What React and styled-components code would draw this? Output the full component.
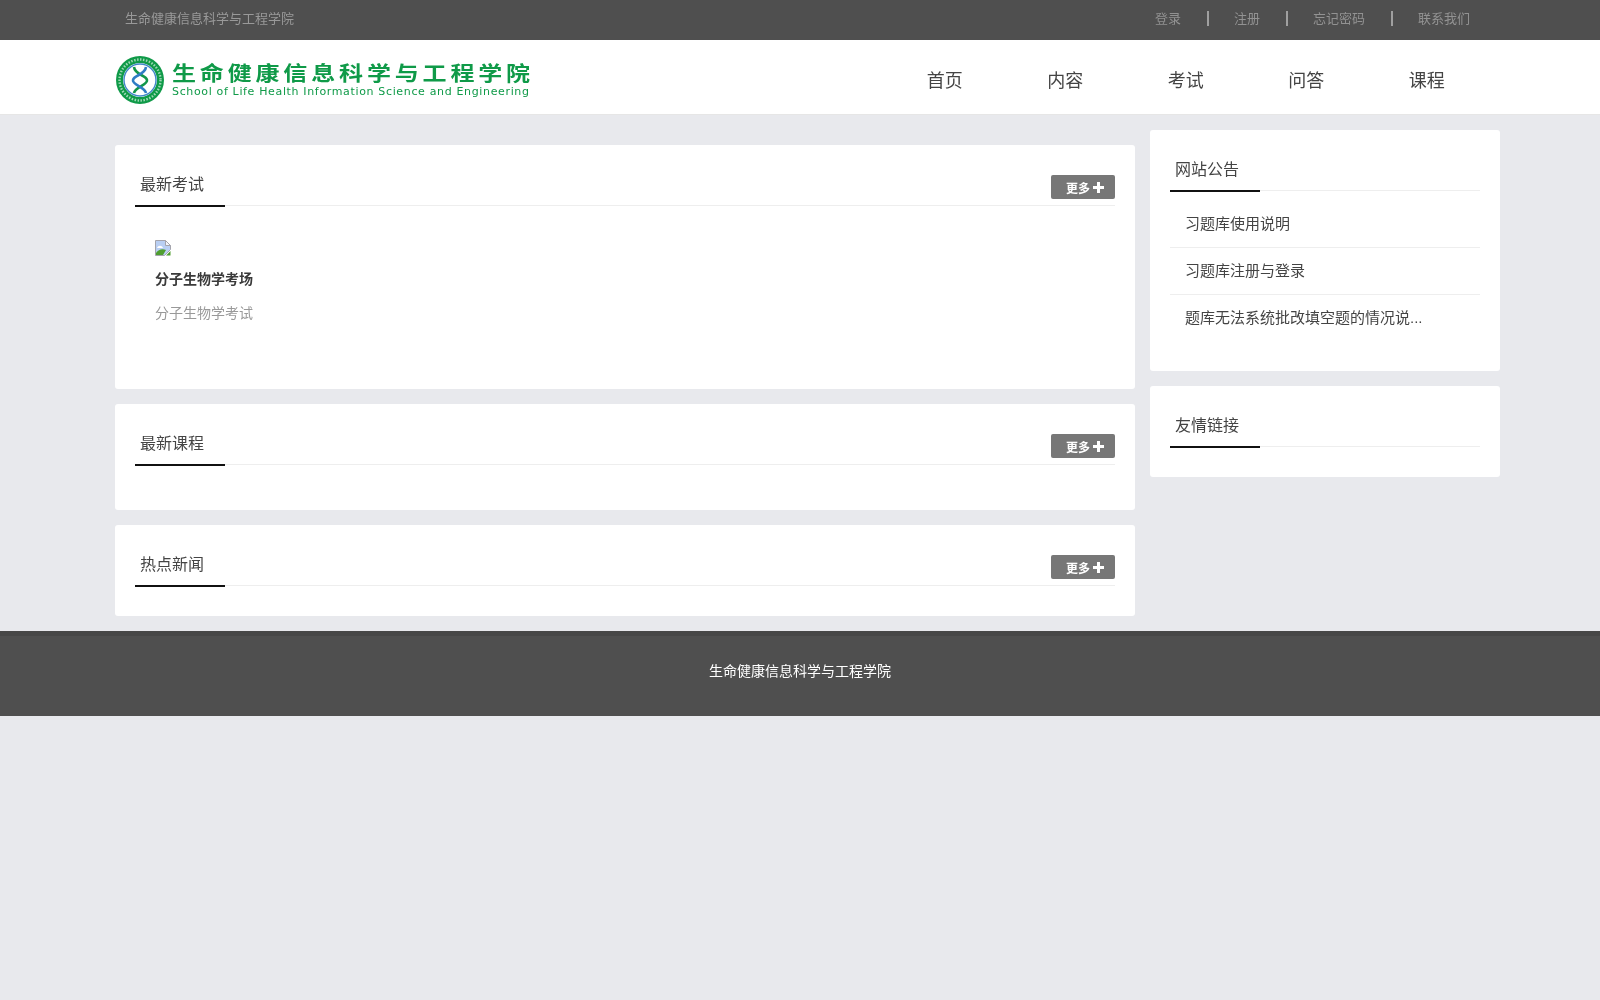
import styled, { createGlobalStyle } from "styled-components";

const navItems = ["首页", "内容", "考试", "问答", "课程"];
const topLinks = ["登录", "注册", "忘记密码", "联系我们"];
const notices = ["习题库使用说明", "习题库注册与登录", "题库无法系统批改填空题的情况说..."];

export default function App() {
  return (
    <>
      <GlobalStyle />
      <TopBar>
        <TopInner>
          <SiteName>生命健康信息科学与工程学院</SiteName>
          <TopLinks>
            {topLinks.map((link) => (
              <TopLink key={link}>{link}</TopLink>
            ))}
          </TopLinks>
        </TopInner>
      </TopBar>
      <Header>
        <HeaderInner>
          <Logo>
            <LogoBadge />
            <LogoText>
              <LogoCn>生命健康信息科学与工程学院</LogoCn>
              <LogoEn>School of Life Health Information Science and Engineering</LogoEn>
            </LogoText>
          </Logo>
          <Nav>
            {navItems.map((item) => (
              <NavItem key={item}>{item}</NavItem>
            ))}
          </Nav>
        </HeaderInner>
      </Header>
      <Main>
        <LeftColumn>
          <Card>
            <SectionTitle title="最新考试" more />
            <ExamItem>
              <BrokenImage />
              <ExamName>分子生物学考场</ExamName>
              <ExamDesc>分子生物学考试</ExamDesc>
            </ExamItem>
          </Card>
          <Card $height={106}>
            <SectionTitle title="最新课程" more />
          </Card>
          <Card $height={91}>
            <SectionTitle title="热点新闻" more />
          </Card>
        </LeftColumn>
        <RightColumn>
          <SideCard>
            <SectionTitle title="网站公告" />
            <NoticeList>
              {notices.map((notice) => (
                <NoticeItem key={notice}>{notice}</NoticeItem>
              ))}
            </NoticeList>
          </SideCard>
          <SideCard>
            <SectionTitle title="友情链接" />
          </SideCard>
        </RightColumn>
      </Main>
      <Footer>生命健康信息科学与工程学院</Footer>
    </>
  );
}

function SectionTitle({ title, more }) {
  return (
    <TitleRow>
      <TitleText>{title}</TitleText>
      {more && (
        <MoreButton>
          更多
          <PlusIcon />
        </MoreButton>
      )}
    </TitleRow>
  );
}

function PlusIcon() {
  return (
    <svg width="11" height="11" viewBox="0 0 11 11">
      <path d="M4 0h3v4h4v3H7v4H4V7H0V4h4z" fill="#fff" />
    </svg>
  );
}

function BrokenImage() {
  return (
    <BrokenIcon width="16" height="16" viewBox="0 0 16 16">
      <path d="M.5.5h10l5 5v4l-6 6H.5z" fill="#b9cff3" stroke="#a4a4ac" />
      <path d="M2 8c1-3 5-3 6 0z" fill="#fff" />
      <path d="M1 15v-2c2-3 6-5 10-3l-3 5z" fill="#4f9e2f" />
      <path d="M11 15.5l4.5-4.5v4.5z" fill="#4f9e2f" />
      <path d="M10.5.5v5h5z" fill="#f4f6fb" stroke="#a4a4ac" />
    </BrokenIcon>
  );
}

function LogoBadge() {
  return (
    <svg width="48" height="48" viewBox="0 0 48 48">
      <circle cx="24" cy="24" r="24" fill="#0f9a48" />
      <circle cx="24" cy="24" r="20.5" fill="none" stroke="#9fd8b5" strokeWidth="2.4" strokeDasharray="1.5 1.5" />
      <circle cx="24" cy="24" r="17" fill="#fff" />
      <circle cx="24" cy="24" r="16" fill="none" stroke="#3f86c8" strokeWidth="1.4" />
      <path d="M18 11c1 8 12 8 13 13s-12 7-13 13" fill="none" stroke="#12964a" strokeWidth="2.6" />
      <path d="M30 11c-1 8-12 8-13 13s12 7 13 13" fill="none" stroke="#2f7cc4" strokeWidth="2.6" />
    </svg>
  );
}

const GlobalStyle = createGlobalStyle`
  html, body {
    margin: 0;
    padding: 0;
    background: #e8e9ed;
    font-family: "Liberation Sans", "Noto Sans CJK SC", sans-serif;
    color: #333;
  }

  #root {
    will-change: transform;
  }
`;

const TopBar = styled.div`
  height: 40px;
  background: #4f4f4f;
`;

const TopInner = styled.div`
  width: 1350px;
  margin-left: 125px;
  height: 100%;
  box-sizing: border-box;
  padding-bottom: 4px;
  display: flex;
  align-items: center;
  justify-content: space-between;
`;

const SiteName = styled.div`
  font-size: 13px;
  line-height: 15px;
  color: #999;
`;

const TopLinks = styled.div`
  display: flex;
  margin-right: -21px;
`;

const TopLink = styled.a`
  font-size: 13px;
  line-height: 15px;
  color: #929292;
  padding: 0 26px 0 25px;
  border-left: 2px solid #a0a0a0;

  &:first-child {
    border-left: 0;
  }
`;

const Header = styled.header`
  height: 75px;
  box-sizing: border-box;
  background: #fff;
  border-bottom: 1px solid #e6e6e6;
`;

const HeaderInner = styled.div`
  margin-left: 116px;
  width: 1371px;
  height: 100%;
  display: flex;
  align-items: center;
  justify-content: space-between;
`;

const Logo = styled.div`
  display: flex;
  align-items: center;
  gap: 8px;
  margin-top: 6px;
`;

const LogoText = styled.div`
  display: flex;
  flex-direction: column;
  color: #0f9a48;
`;

const LogoCn = styled.div`
  margin-top: 1px;
  font-size: 20px;
  line-height: 24px;
  font-weight: 700;
  letter-spacing: 3.2px;
  white-space: nowrap;
  transform: scaleX(1.2);
  transform-origin: left center;
`;

const LogoEn = styled.div`
  margin-top: -1px;
  font-family: "DejaVu Sans", sans-serif;
  font-size: 11px;
  line-height: 14px;
  letter-spacing: 0.65px;
  white-space: nowrap;
`;

const Nav = styled.nav`
  display: flex;
  margin-top: 3px;
`;

const NavItem = styled.a`
  font-size: 18px;
  color: #444;
  padding: 0 42.25px;
`;

const Main = styled.main`
  width: 1385px;
  margin-left: 115px;
  display: flex;
  align-items: flex-start;
  gap: 15px;
  padding-top: 15px;
`;

const LeftColumn = styled.div`
  width: 1020px;
  margin-top: 15px;
  display: flex;
  flex-direction: column;
  gap: 15px;
`;

const RightColumn = styled.div`
  width: 350px;
  display: flex;
  flex-direction: column;
  gap: 15px;
`;

const Card = styled.section`
  background: #fff;
  border-radius: 3px;
  box-sizing: border-box;
  padding: 20px 20px 0;
  height: ${(props) => (props.$height ? `${props.$height}px` : "244px")};
`;

const SideCard = styled(Card)`
  height: auto;
  padding-bottom: 30px;
`;

const TitleRow = styled.div`
  height: 40px;
  border-bottom: 1px solid #eee;
  display: flex;
  justify-content: space-between;
  align-items: flex-start;
  position: relative;

  &::after {
    content: "";
    position: absolute;
    left: 0;
    bottom: -2px;
    width: 90px;
    height: 2px;
    background: #111;
  }
`;

const TitleText = styled.h3`
  margin: 0;
  padding-left: 5px;
  font-size: 16px;
  font-weight: 400;
  line-height: 40px;
  color: #444;
`;

const MoreButton = styled.a`
  width: 64px;
  height: 24px;
  margin-top: 10px;
  box-sizing: border-box;
  padding-left: 15px;
  background: #777;
  border-radius: 2px;
  color: #fff;
  font-size: 12px;
  font-weight: 700;
  display: flex;
  align-items: center;
  gap: 3px;
`;

const ExamItem = styled.div`
  padding: 34px 20px 0;
`;

const BrokenIcon = styled.svg`
  display: block;
`;

const ExamName = styled.div`
  margin-top: 13px;
  font-size: 14px;
  line-height: 20px;
  font-weight: 700;
  color: #3a3a3a;
`;

const ExamDesc = styled.div`
  margin-top: 14px;
  font-size: 14px;
  line-height: 20px;
  color: #999;
`;

const NoticeList = styled.ul`
  list-style: none;
  margin: 0;
  padding: 10px 0 0;
`;

const NoticeItem = styled.li`
  height: 47px;
  box-sizing: border-box;
  padding-left: 15px;
  font-size: 15px;
  line-height: 46px;
  color: #444;
  border-bottom: 1px solid #eee;

  &:last-child {
    height: 46px;
    border-bottom: 0;
  }
`;

const Footer = styled.footer`
  margin-top: 15px;
  height: 85px;
  box-sizing: border-box;
  padding-top: 25px;
  background: #4f4f4f;
  border-top: 5px solid #474747;
  color: #fff;
  font-size: 14px;
  line-height: 20px;
  text-align: center;
`;
